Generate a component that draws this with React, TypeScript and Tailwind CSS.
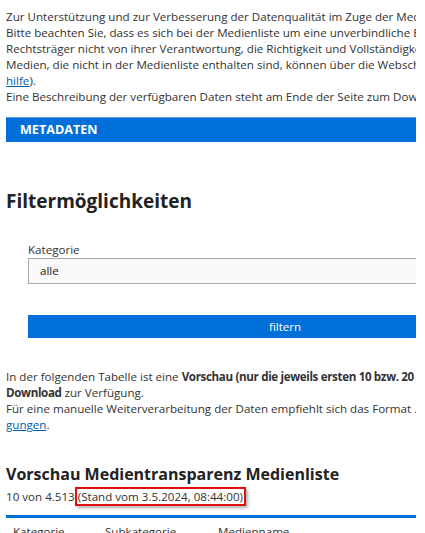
export default function App() {
  return (
    <div className="bg-white min-h-screen pl-[6px] pt-[9px]">
      <div className="w-[410px] overflow-hidden font-['Open_Sans',sans-serif] text-[11.6px] leading-[16px] text-[#333]">
        <div className="w-[600px]">
          {/* Intro */}
          <div className="whitespace-nowrap">
            <p>Zur Unterstützung und zur Verbesserung der Datenqualität im Zuge der Medientransparenz-Meldungen</p>
            <p>Bitte beachten Sie, dass es sich bei der Medienliste um eine unverbindliche Empfehlung handelt</p>
            <p>Rechtsträger nicht von ihrer Verantwortung, die Richtigkeit und Vollständigkeit zu prüfen.</p>
            <p>Medien, die nicht in der Medienliste enthalten sind, können über die Webschnittstelle gemeldet werden (</p>
            <p>
              <a href="#" className="text-[#0060b0] underline">hilfe</a>).
            </p>
            <p>Eine Beschreibung der verfügbaren Daten steht am Ende der Seite zum Download bereit.</p>
          </div>

          <div className="mt-[12px] h-[25px] bg-[#0070d8] border-t border-[#5aa0e6] px-[14px] flex items-center">
            <span className="text-white font-bold text-[12.6px] uppercase">Metadaten</span>
          </div>

          {/* Filter */}
          <h2 className="mt-[46px] text-[19px] leading-[26px] font-bold text-[#222]">Filtermöglichkeiten</h2>

          <div className="pl-[22px] mt-[28px]">
            <label className="block leading-[16px] text-[#333]">Kategorie</label>
            <div className="h-[26px] w-[540px] border border-[#aaa] bg-[#fafafa] flex items-center px-[11px] text-[#222]">
              alle
            </div>
            <button className="mt-[31px] h-[23px] w-[514px] bg-[#0070d8] text-white flex items-center justify-center">
              filtern
            </button>
          </div>

          {/* Preview info */}
          <div className="mt-[31px] whitespace-nowrap">
            <p>
              In der folgenden Tabelle ist eine{' '}
              <b className="font-bold tracking-[-0.35px]">Vorschau (nur die jeweils ersten 10 bzw. 20 Einträge)</b>
            </p>
            <p>
              <b className="font-bold tracking-[-0.35px]">Download</b> zur Verfügung.
            </p>
            <p>Für eine manuelle Weiterverarbeitung der Daten empfiehlt sich das Format ...</p>
            <p>
              <a href="#" className="text-[#0060b0] underline">gungen</a>.
            </p>
          </div>

          <h3 className="mt-[30px] text-[16px] leading-[22px] font-bold text-[#222]">Vorschau Medientransparenz Medienliste</h3>
          <p className="mt-[2px] whitespace-nowrap">
            10 von 4.513
            <span className="inline-block border-2 border-[#e01010] shadow-[2px_2px_3px_rgba(0,0,0,0.3)] px-[1px] leading-[15px]">
              (Stand vom 3.5.2024, 08:44:00)
            </span>
          </p>

          <div className="mt-[9px] border-t-[3px] border-[#0070d8]">
            <div className="flex pt-[6px] pl-[7px] text-[#333]">
              <span className="w-[92px]">Kategorie</span>
              <span className="w-[113px]">Subkategorie</span>
              <span>Medienname</span>
            </div>
          </div>
        </div>
      </div>
    </div>
  );
}
